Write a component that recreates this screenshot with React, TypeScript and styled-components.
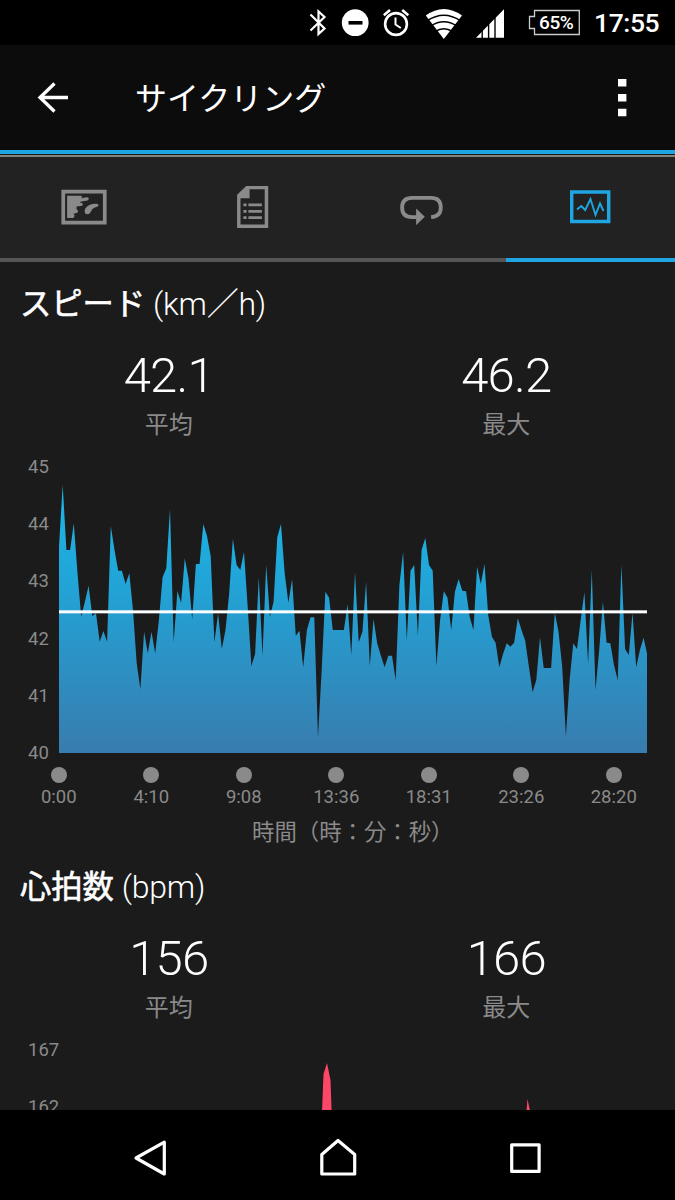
import React from "react";
import styled, { createGlobalStyle } from "styled-components";

const GlobalStyle = createGlobalStyle`
  *, *::before, *::after { box-sizing: border-box; }
  body { margin: 0; background: #1b1b1b; }
  svg { display: block; flex: none; }
`;

const BLUE = "#1fa5e2";
const GRAY = "#8a8a8a";

const Screen = styled.div`
  width: 675px;
  height: 1200px;
  display: flex;
  flex-direction: column;
  overflow: hidden;
  background: #1b1b1b;
  color: #fff;
  font-family: Roboto, "Noto Sans CJK JP", sans-serif;
`;

const StatusBar = styled.div`
  height: 45px;
  flex: none;
  display: flex;
  align-items: center;
  justify-content: flex-end;
  padding-right: 15px;
  background: #000;
`;

const StatusIcons = styled.div`
  display: flex;
  gap: 14px;
  margin-right: 24px;
`;

const Battery = styled.div`
  position: relative;
  width: 52px;
  height: 45px;
  margin-right: 14px;
`;

const BatteryText = styled.span`
  position: absolute;
  left: 11px;
  top: 12px;
  line-height: 22px;
  font-size: 19px;
  font-weight: 500;
  letter-spacing: -0.4px;
`;

const Clock = styled.span`
  width: 66px;
  line-height: 45px;
  font-size: 26.5px;
  font-weight: 500;
  letter-spacing: -0.4px;
  white-space: nowrap;
`;

const Toolbar = styled.header`
  height: 109px;
  flex: none;
  display: flex;
  align-items: center;
  padding: 0 48px 0 37px;
  background: #0c0c0c;
  border-bottom: 4px solid ${BLUE};
`;

const Title = styled.h1`
  flex: 1;
  margin: 2px 0 0 66px;
  font-size: 32px;
  line-height: 48px;
  font-weight: 400;
`;

const Tabs = styled.nav`
  height: 107px;
  flex: none;
  display: grid;
  grid-template-columns: repeat(4, 1fr);
  margin-top: 1px;
  border-top: 2px solid #84847e;
  background: #222;
`;

const Tab = styled.div<{ $active?: boolean }>`
  display: flex;
  justify-content: center;
  border-bottom: 4px solid ${(p) => (p.$active ? BLUE : "#555")};
`;

const Content = styled.main`
  flex: 1;
  min-height: 0;
  padding-top: 1px;
  overflow: hidden;
`;

const Section = styled.section`
  height: 583px;
`;

const SectionTitle = styled.h2`
  margin: 0;
  padding: 17px 0 0 20px;
  font-size: 31.3px;
  line-height: 48px;
  font-weight: 400;
  -webkit-text-stroke: 0.6px #fff;
  white-space: nowrap;
`;

const Unit = styled.span`
  font-weight: 300;
  font-size: 32px;
  letter-spacing: -0.2px;
  -webkit-text-stroke: 0;
`;

const Slash = styled.span`
  font-weight: 400;
`;

const Stats = styled.div`
  display: grid;
  grid-template-columns: 1fr 1fr;
  padding-top: 18px;
  text-align: center;
`;

const StatValue = styled.div`
  font-size: 49px;
  line-height: 58px;
  font-weight: 300;
  letter-spacing: -0.8px;
`;

const StatLabel = styled.div`
  padding-top: 2px;
  font-size: 24px;
  line-height: 36px;
  color: ${GRAY};
`;

const Chart = styled.div`
  display: flex;
  padding: 14px 0 0 28px;
`;

const YAxis = styled.div`
  width: 31px;
  display: flex;
  flex-direction: column;
  gap: 37.2px;
  color: ${GRAY};
  font-size: 18.5px;
  line-height: 20px;
`;

const Plot = styled.div`
  padding-top: 10px;
`;

const XAxis = styled.div`
  display: flex;
  margin: 4px 0 0 12.5px;
`;

const Mark = styled.div`
  width: 92.5px;
  flex: none;
  display: flex;
  flex-direction: column;
  align-items: center;
  color: ${GRAY};
  font-size: 18.5px;
  line-height: 22px;

  &::before {
    content: "";
    width: 16px;
    height: 16px;
    margin-bottom: 3px;
    border-radius: 50%;
    background: ${GRAY};
  }
`;

const AxisTitle = styled.div`
  padding: 7px 0 0 252px;
  font-size: 22.4px;
  line-height: 34px;
  color: ${GRAY};
  white-space: nowrap;
`;

const NavBar = styled.footer`
  height: 90px;
  flex: none;
  display: flex;
  justify-content: space-between;
  padding: 0 133px;
  background: #000;
`;

/* Curve depths below the top grid line, 3 units per pixel, evenly spaced in time */
const SPEED = [
  290, 105, 300, 300, 220, 370, 500, 455, 407, 498, 490, 575, 543, 575, 228, 300, 362, 362, 402, 370,
  480, 640, 718, 545, 610, 545, 610, 510, 382, 355, 177, 577, 423, 458, 325, 385, 508, 342, 342, 222,
  258, 318, 577, 490, 597, 540, 430, 266, 345, 360, 306, 470, 648, 612, 382, 617, 345, 500, 455, 262,
  222, 370, 458, 388, 557, 542, 652, 540, 502, 502, 862, 660, 425, 443, 540, 540, 540, 540, 463, 615,
  365, 577, 545, 396, 648, 507, 580, 617, 652, 617, 617, 690, 405, 306, 570, 362, 345, 558, 300, 264,
  345, 362, 648, 510, 424, 443, 540, 425, 387, 422, 424, 500, 540, 350, 402, 342, 495, 560, 578, 652,
  612, 580, 590, 578, 505, 540, 572, 650, 727, 690, 562, 654, 654, 654, 488, 545, 650, 858, 690, 580,
  597, 510, 427, 642, 360, 720, 600, 455, 578, 580, 645, 690, 345, 597, 615, 488, 652, 600, 563, 615,
];
const BASE = 909;
const WIDTH = 1765;
const speedPoints = [
  `0,${BASE}`,
  ...SPEED.map((y, i) => `${((i * WIDTH) / (SPEED.length - 1)).toFixed(1)},${y}`),
  `${WIDTH},${BASE}`,
].join(" ");

const TIMES = ["0:00", "4:10", "9:08", "13:36", "18:31", "23:26", "28:20"];

const SpeedPlot = () => (
  <svg width="588.3" height="286" viewBox="0 51 1765 858" preserveAspectRatio="none">
    <defs>
      <linearGradient id="speed" gradientUnits="userSpaceOnUse" x1="0" y1="105" x2="0" y2="909">
        <stop offset="0" stopColor="#1cb7e6" />
        <stop offset="0.35" stopColor="#21a5d8" />
        <stop offset="1" stopColor="#387cae" />
      </linearGradient>
    </defs>
    <polygon points={speedPoints} fill="url(#speed)" />
    <rect x="0" y="481" width="1765" height="9" fill="#fff" />
  </svg>
);

const HeartPlot = () => (
  <svg width="588.3" height="100" viewBox="59 1050 588.3 100">
    <path d="M320.5 1150L323.5 1074L327 1063L330.5 1080L333 1150Z M525 1130L527.5 1099L532 1120V1130Z" fill="#fd4768" />
  </svg>
);

type StatProps = { value: string; label: string };
const Stat = ({ value, label }: StatProps) => (
  <div>
    <StatValue>{value}</StatValue>
    <StatLabel>{label}</StatLabel>
  </div>
);

export default function App() {
  return (
    <>
      <GlobalStyle />
      <Screen>
        <StatusBar>
          <StatusIcons>
            <svg width="18" height="45" viewBox="309 0 18 45" fill="none" stroke="#fff" strokeWidth="2.2">
              <path d="M310.5 14.5L324.5 28.5L318.5 34V11.5L324.5 17L310.5 30.5" />
            </svg>
            <svg width="28" height="45" viewBox="341 0 28 45">
              <circle cx="355.2" cy="22.7" r="13.4" fill="#fff" />
              <rect x="348.5" y="21" width="14" height="3.6" fill="#000" />
            </svg>
            <svg width="28" height="45" viewBox="383 0 28 45" fill="none" stroke="#fff">
              <circle cx="396" cy="24" r="10.9" strokeWidth="2.6" />
              <path d="M395.5 17.5V24.5L400.8 28" strokeWidth="2" />
              <path d="M383.8 15.2L390 10M402.2 10L408.3 15.2" strokeWidth="2.6" />
            </svg>
            <svg width="37" height="45" viewBox="425 0 37 45">
              <path d="M425.8 15.5Q443.8 2.5 462 15.5L443.8 39Z" fill="#fff" />
              <path
                d="M427 20.8Q443.8 9.5 460.6 20.8M430.8 26Q443.8 17.5 456.8 26M435.2 31.5Q443.8 26 452.5 31.5"
                fill="none"
                stroke="#000"
                strokeWidth="1.5"
              />
            </svg>
            <svg width="28" height="45" viewBox="476 0 28 45">
              <path d="M476 37.7L504 9.3V37.7Z" fill="#fff" />
              <path d="M482.2 9V38M488.6 9V38M495 9V38" stroke="#000" strokeWidth="1.4" />
            </svg>
          </StatusIcons>
          <Battery>
            <svg width="52" height="45" viewBox="528 0 52 45">
              <path
                d="M534.5 10.5H579.3V34.5H534.5V28.5H529.5V16.5H534.5Z"
                fill="none"
                stroke="#ccc"
                strokeWidth="1.3"
              />
            </svg>
            <BatteryText>65%</BatteryText>
          </Battery>
          <Clock>17:55</Clock>
        </StatusBar>

        <Toolbar>
          <svg width="32" height="105" viewBox="37 45 32 105" fill="none" stroke="#fff" strokeWidth="3.3">
            <path d="M54.5 83.5L40 97.5L54.5 111.5M39.5 97.5H68" />
          </svg>
          <Title>サイクリング</Title>
          <svg width="10" height="105" viewBox="617 45 10 105" fill="#fff">
            <path d="M618 79H626.4V86.6H618ZM618 94H626.4V101.6H618ZM618 108.7H626.4V116.3H618Z" />
          </svg>
        </Toolbar>

        <Tabs>
          <Tab>
            <svg width="46" height="101" viewBox="61.4 157 46 101" fill={GRAY}>
              <path d="M61.8 189.7H107V224.5H61.8ZM65.5 193.4V220.8H103.3V193.4Z" fillRule="evenodd" />
              <path d="M67.5 195.8H81.5Q83 196 82 198.2Q85.5 197.3 88 197.3Q90.5 198.7 88 200.5L82 201.5Q78.5 202.5 81.5 202.7Q84 203.3 83 205.3Q82 206.3 77.5 206.3Q76 207.5 77.5 208.5H76Q79.5 210.5 78 212.5Q76.5 213.5 74 213.5Q76 216 73.5 218H67.5Z" />
              <path d="M97.5 203.8Q100.5 205.6 97.5 206.8Q92.5 208 91.5 211.5Q90 214.6 86.5 214.1Q84 212.5 85.7 208.5Q89 203.3 97.5 203.8Z" />
            </svg>
          </Tab>
          <Tab>
            <svg width="32" height="101" viewBox="237.1 157 32 101" fill={GRAY}>
              <path
                d="M246.3 186H268.3V228H237.2V194.8ZM249.7 189.2V198.3H240.6V224.6H264.8V189.2Z"
                fillRule="evenodd"
              />
              <path d="M248.5 203.5H262V206.2H248.5ZM248.5 210H262V212.7H248.5ZM248.5 216.2H262V218.9H248.5Z" />
              <path d="M243.5 203.5H246.7V206.2H243.5ZM243.5 210H246.7V212.7H243.5ZM243.5 216.2H246.7V218.9H243.5Z" />
            </svg>
          </Tab>
          <Tab>
            <svg width="44" height="101" viewBox="399.9 157 44 101">
              <path
                d="M431 217.1Q440.7 216.5 440.7 207.5Q440.7 197.9 431 197.9H412Q402 197.9 402 207.5Q402 217.1 412 217.1H417"
                fill="none"
                stroke={GRAY}
                strokeWidth="3.8"
              />
              <path d="M416 208.5L424.7 216.8L416 225.3Z" fill={GRAY} />
            </svg>
          </Tab>
          <Tab $active>
            <svg width="42" height="101" viewBox="570 157 42 101" fill="none" stroke={BLUE}>
              <rect x="571.7" y="192" width="37" height="29.5" strokeWidth="3.5" />
              <path d="M577 209.5L581.3 206L585.2 210L590.5 199L595.5 215L600 203.5L603.5 211" strokeWidth="1.9" />
            </svg>
          </Tab>
        </Tabs>

        <Content>
          <Section>
            <SectionTitle>
              スピード{" "}
              <Unit>
                (km<Slash>／</Slash>h)
              </Unit>
            </SectionTitle>
            <Stats>
              <Stat value="42.1" label="平均" />
              <Stat value="46.2" label="最大" />
            </Stats>
            <Chart>
              <YAxis>
                {[45, 44, 43, 42, 41, 40].map((v) => (
                  <span key={v}>{v}</span>
                ))}
              </YAxis>
              <Plot>
                <SpeedPlot />
              </Plot>
            </Chart>
            <XAxis>
              {TIMES.map((t) => (
                <Mark key={t}>{t}</Mark>
              ))}
            </XAxis>
            <AxisTitle>時間（時：分：秒）</AxisTitle>
          </Section>

          <Section>
            <SectionTitle>
              心拍数 <Unit>(bpm)</Unit>
            </SectionTitle>
            <Stats>
              <Stat value="156" label="平均" />
              <Stat value="166" label="最大" />
            </Stats>
            <Chart>
              <YAxis>
                {[167, 162].map((v) => (
                  <span key={v}>{v}</span>
                ))}
              </YAxis>
              <Plot>
                <HeartPlot />
              </Plot>
            </Chart>
          </Section>
        </Content>

        <NavBar>
          <svg width="34" height="90" viewBox="133 1110 34 90" fill="none" stroke="#fff" strokeWidth="3.2" strokeLinejoin="round">
            <path d="M164.3 1142.2V1174L136 1158Z" />
          </svg>
          <svg width="38" height="90" viewBox="319.5 1110 38 90" fill="none" stroke="#fff" strokeWidth="3.2" strokeLinejoin="round">
            <path d="M321.3 1174V1154.5L337.5 1140.5L354.2 1154.5V1174Z" />
          </svg>
          <svg width="32" height="90" viewBox="510 1110 32 90" fill="none" stroke="#fff" strokeWidth="3.2" strokeLinejoin="round">
            <rect x="511.7" y="1144.8" width="27.4" height="26.6" />
          </svg>
        </NavBar>
      </Screen>
    </>
  );
}
